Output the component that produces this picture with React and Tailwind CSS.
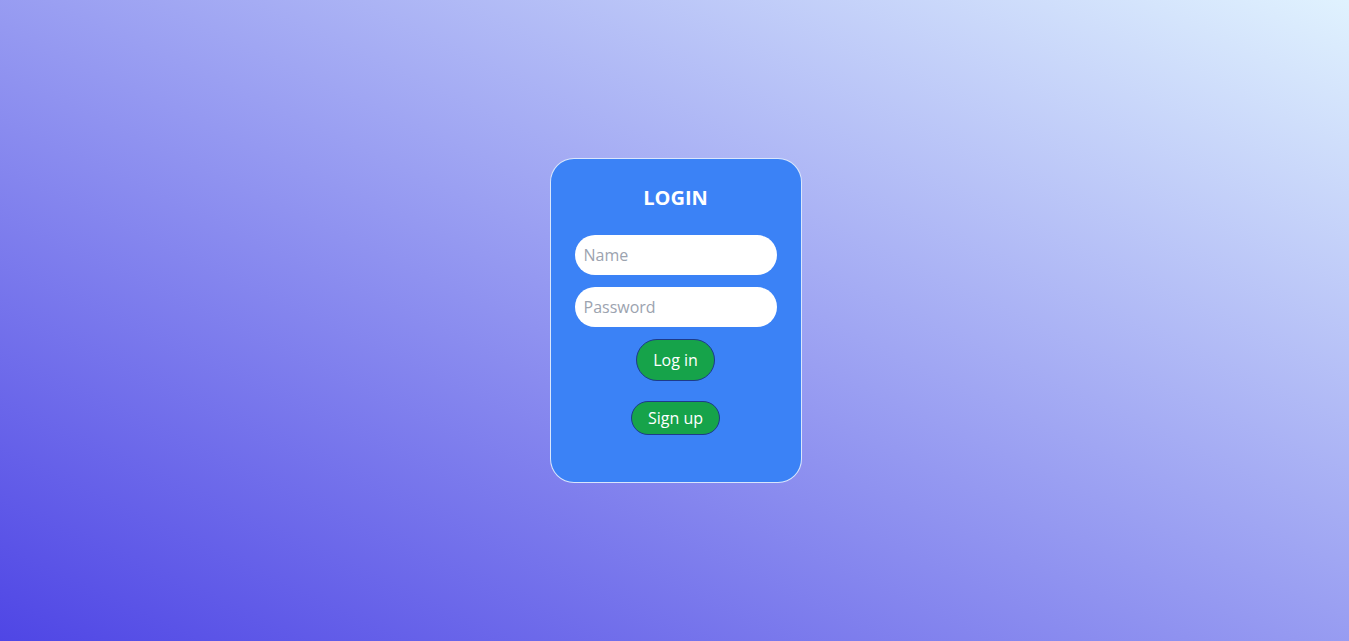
import React from 'react';

const App = () => {
    return (
        <div
            className="min-h-screen w-full flex items-center justify-center bg-[linear-gradient(to_top_right,#4f46e5,#e0f2fe)]"
            style={{ fontFamily: '"Open Sans", "Noto Sans", sans-serif' }}
        >
            {/* Login card */}
            <div className="ml-[2px] w-[252px] h-[325px] bg-[#3b82f6] border border-white/80 rounded-3xl px-6 pt-6 flex flex-col items-center">
                <h1 className="text-xl leading-7 font-bold text-white mt-px mb-6">LOGIN</h1>
                <div className="w-full space-y-3 -mt-px">
                    <input
                        type="text"
                        placeholder="Name"
                        className="block w-full h-10 rounded-full bg-white px-[9px] text-base text-[#374151] placeholder:text-[#9ca3af] outline-none"
                    />
                    <input
                        type="password"
                        placeholder="Password"
                        className="block w-full h-10 rounded-full bg-white px-[9px] text-base text-[#374151] placeholder:text-[#9ca3af] outline-none"
                    />
                </div>
                <button className="mt-3 bg-[#16a34a] border border-[#1e3a8a] text-white text-base leading-6 rounded-full px-4 py-2">
                    Log in
                </button>
                <button className="mt-5 bg-[#16a34a] border border-[#1e3a8a] text-white text-base leading-6 rounded-full px-4 py-1">
                    Sign up
                </button>
            </div>
        </div>
    );
};

export default App;
